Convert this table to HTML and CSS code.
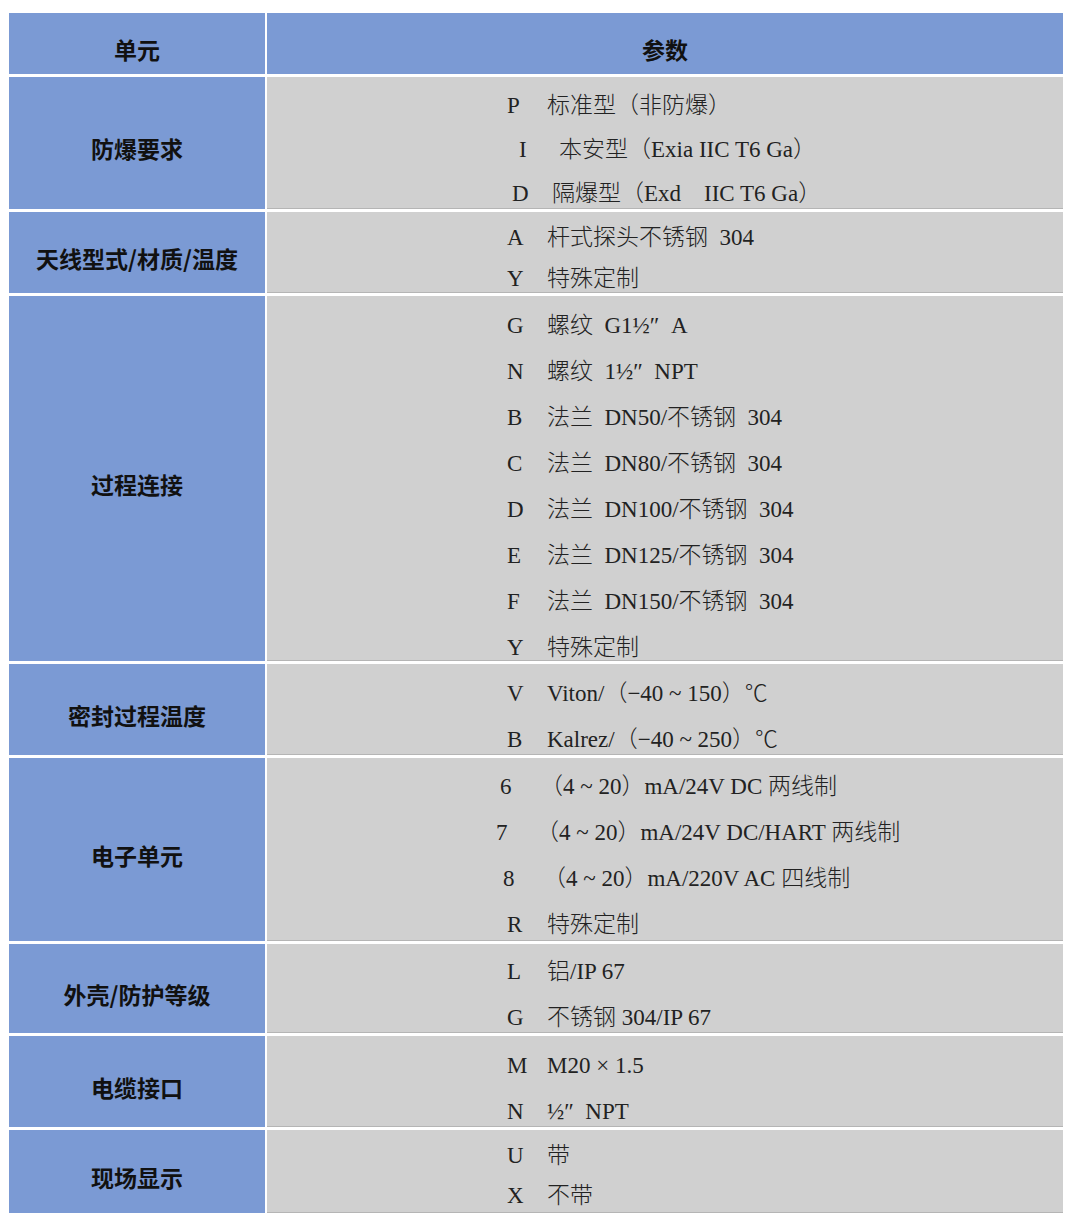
FILE: index.html
```html
<!DOCTYPE html>
<html lang="zh-CN">
<head>
<meta charset="utf-8">
<title>选型表</title>
<link rel="stylesheet" href="styles.css">
</head>
<body>
<div class="spec">
  <div class="cell head">单元</div>
  <div class="cell head">参数</div>

  <div class="cell label">防爆要求</div>
  <div class="cell vals lh44">
    <div class="item"><span class="code">P</span>标准型（非防爆）</div>
    <div class="item s10"><span class="code">I</span>本安型（Exia IIC T6 Ga）</div>
    <div class="item s5"><span class="code">D</span>隔爆型（Exd　IIC T6 Ga）</div>
  </div>

  <div class="cell label">天线型式/材质/温度</div>
  <div class="cell vals lh41">
    <div class="item"><span class="code">A</span>杆式探头不锈钢&#8194;304</div>
    <div class="item"><span class="code">Y</span>特殊定制</div>
  </div>

  <div class="cell label">过程连接</div>
  <div class="cell vals">
    <div class="item"><span class="code">G</span>螺纹&#8194;G1½″&#8194;A</div>
    <div class="item"><span class="code">N</span>螺纹&#8194;1½″&#8194;NPT</div>
    <div class="item"><span class="code">B</span>法兰&#8194;DN50/不锈钢&#8194;304</div>
    <div class="item"><span class="code">C</span>法兰&#8194;DN80/不锈钢&#8194;304</div>
    <div class="item"><span class="code">D</span>法兰&#8194;DN100/不锈钢&#8194;304</div>
    <div class="item"><span class="code">E</span>法兰&#8194;DN125/不锈钢&#8194;304</div>
    <div class="item"><span class="code">F</span>法兰&#8194;DN150/不锈钢&#8194;304</div>
    <div class="item"><span class="code">Y</span>特殊定制</div>
  </div>

  <div class="cell label">密封过程温度</div>
  <div class="cell vals">
    <div class="item"><span class="code">V</span>Viton/（−40 ~ 150）℃</div>
    <div class="item"><span class="code">B</span>Kalrez/（−40 ~ 250）℃</div>
  </div>

  <div class="cell label">电子单元</div>
  <div class="cell vals pt6">
    <div class="item sm7"><span class="code">6</span>（4 ~ 20）mA/24V DC 两线制</div>
    <div class="item sm11"><span class="code">7</span>（4 ~ 20）mA/24V DC/HART 两线制</div>
    <div class="item sm4"><span class="code">8</span>（4 ~ 20）mA/220V AC 四线制</div>
    <div class="item"><span class="code">R</span>特殊定制</div>
  </div>

  <div class="cell label">外壳/防护等级</div>
  <div class="cell vals pt5">
    <div class="item"><span class="code">L</span>铝/IP 67</div>
    <div class="item"><span class="code">G</span>不锈钢 304/IP 67</div>
  </div>

  <div class="cell label">电缆接口</div>
  <div class="cell vals">
    <div class="item"><span class="code">M</span>M20 × 1.5</div>
    <div class="item"><span class="code">N</span>½″&#8194;NPT</div>
  </div>

  <div class="cell label">现场显示</div>
  <div class="cell vals lh40">
    <div class="item"><span class="code">U</span>带</div>
    <div class="item"><span class="code">X</span>不带</div>
  </div>
</div>
</body>
</html>
```
FILE: styles.css
```css
html, body {
  margin: 0;
  padding: 0;
  background: #ffffff;
}

body {
  padding: 13px 7px 9px 9px;
}

.spec {
  display: grid;
  grid-template-columns: 256px 1fr;
  grid-template-rows: 61px 132px 81px 365px 91px 183px 89px 91px 83px;
  column-gap: 2px;
  row-gap: 3px;
}

.cell {
  box-sizing: border-box;
}

.head,
.label {
  background: #7b9ad4;
  color: #111111;
  font-family: "Noto Sans CJK SC", "Noto Sans", sans-serif;
  font-weight: 700;
  font-size: 23px;
  display: flex;
  align-items: center;
  justify-content: center;
  padding-top: 10px;
}

.vals {
  background: #d0d0d0;
  border-bottom: 1px solid #b5b5b5;
  color: #222222;
  font-family: "Liberation Serif", "Noto Sans CJK SC", serif;
  font-weight: 300;
  font-size: 23px;
  line-height: 46px;
  padding: 7px 0 0 240px;
  overflow: hidden;
}

.vals.lh44 { line-height: 44px; }
.vals.lh41 { line-height: 41px; padding-top: 5px; }
.vals.lh40 { line-height: 40px; padding-top: 6px; }
.vals.pt6 { padding-top: 6px; }
.vals.pt5 { padding-top: 5px; }

.item {
  white-space: pre;
}

.code {
  display: inline-block;
  width: 40px;
}

.s10 { margin-left: 12px; }
.s5 { margin-left: 5px; }
.sm7 { margin-left: -7px; }
.sm11 { margin-left: -11px; }
.sm4 { margin-left: -4px; }
```
